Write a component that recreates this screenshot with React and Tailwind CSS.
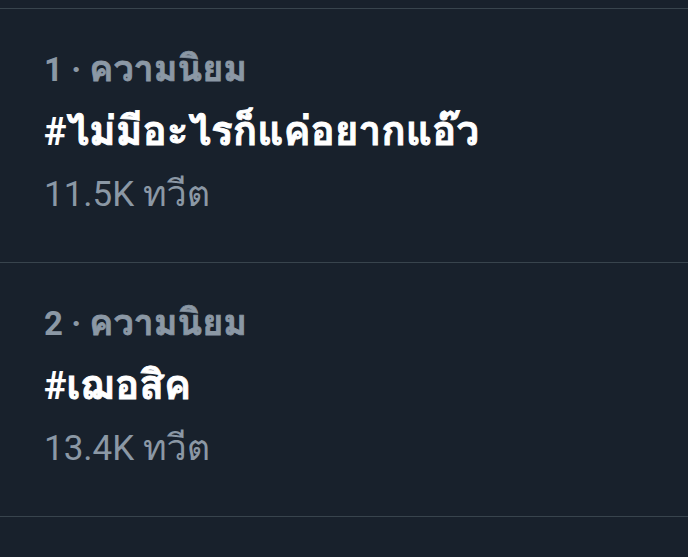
import React from "react";

const rows = [
  { rank: 1, title: "ไม่มีอะไรก็แค่อยากแอ๊ว", count: "11.5K" },
  { rank: 2, title: "เฌอสิค", count: "13.4K" },
];

export default function App() {
  return (
    <div className="w-[688px] h-[557px] overflow-hidden bg-[#18212c] [font-family:Roboto,Loma,'Noto_Sans_Thai',sans-serif]">
      <div className="h-[8px]" />
      {rows.map((r) => (
        <div
          key={r.rank}
          className="border-t border-[#38444d] pl-[44px] pt-[40px] pb-[48px] flex flex-col"
        >
          <div className="h-[40px] leading-[40px] text-[33px] font-bold text-[#8b98a5] whitespace-nowrap">
            {r.rank} ·{" "}
            <span className="text-[36px] [-webkit-text-stroke-width:0.8px]">ความนิยม</span>
          </div>
          <div className="mt-[18px] h-[48px] leading-[48px] text-[38px] font-bold text-white whitespace-nowrap">
            #<span className="text-[40.5px] [-webkit-text-stroke-width:0.9px]">{r.title}</span>
          </div>
          <div className="mt-[19px] h-[40px] leading-[40px] text-[35px] text-[#8b98a5] whitespace-nowrap">
            {r.count} <span className="text-[36px]">ทวีต</span>
          </div>
        </div>
      ))}
      <div className="border-t border-[#38444d] h-[60px]" />
    </div>
  );
}
